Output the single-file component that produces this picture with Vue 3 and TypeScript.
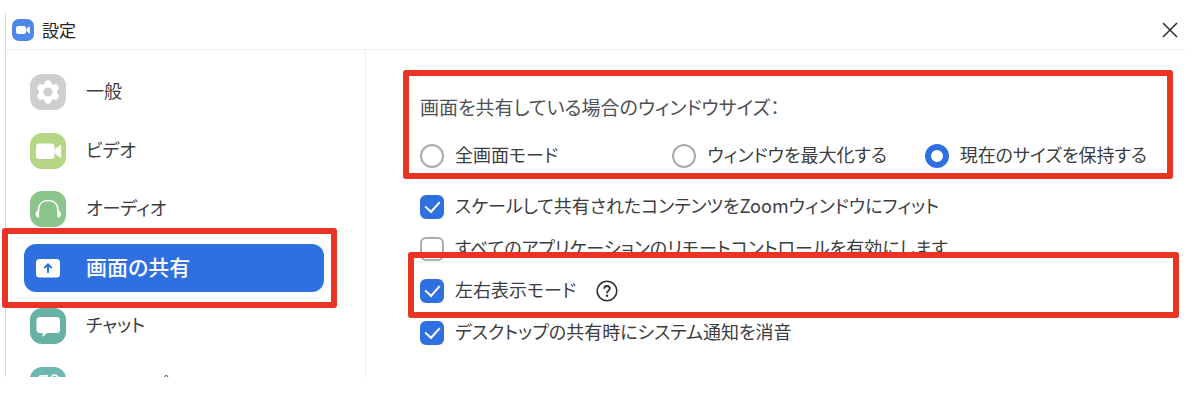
<script setup lang="ts">
import { ref } from 'vue'

interface NavItem {
  id: string
  label: string
  tint: string
}

interface Toggle {
  id: string
  label: string
  checked: boolean
  help?: boolean
  marked?: boolean
}

const navItems: NavItem[] = [
  { id: 'general', label: '一般', tint: 'gray' },
  { id: 'video', label: 'ビデオ', tint: 'lime' },
  { id: 'audio', label: 'オーディオ', tint: 'green' },
  { id: 'share', label: '画面の共有', tint: 'blue' },
  { id: 'chat', label: 'チャット', tint: 'teal' },
  { id: 'apps', label: 'Zoomアプリ', tint: 'aqua' },
]
const current = ref('share')

const sizes = [
  { id: 'full', label: '全画面モード' },
  { id: 'max', label: 'ウィンドウを最大化する' },
  { id: 'keep', label: '現在のサイズを保持する' },
]
const size = ref('keep')

const toggles = ref<Toggle[]>([
  { id: 'fit', label: 'スケールして共有されたコンテンツをZoomウィンドウにフィット', checked: true },
  { id: 'remote', label: 'すべてのアプリケーションのリモートコントロールを有効にします', checked: false },
  { id: 'side', label: '左右表示モード', checked: true, help: true, marked: true },
  { id: 'mute', label: 'デスクトップの共有時にシステム通知を消音', checked: true },
])
</script>

<template>
  <div class="page">
    <div class="window">
      <header class="titlebar">
        <svg class="logo" viewBox="0 0 22 22" aria-hidden="true">
          <rect width="22" height="22" rx="7" fill="#4f86ea" />
          <rect x="4" y="7" width="10" height="8" rx="2" fill="#fff" />
          <path d="M14.8 9.8 17.6 7.6V14.4L14.8 12.2Z" fill="#fff" stroke="#fff" stroke-width=".6" stroke-linejoin="round" />
        </svg>
        <h1 class="title">設定</h1>
        <button class="close" type="button" aria-label="閉じる">
          <svg viewBox="0 0 16 16" aria-hidden="true">
            <path d="M1 1 15 15M15 1 1 15" stroke="#333" stroke-width="1.6" fill="none" />
          </svg>
        </button>
      </header>

      <div class="body">
        <nav class="sidebar">
          <button
            v-for="item in navItems"
            :key="item.id"
            type="button"
            class="nav-item"
            :class="{ active: current === item.id }"
            @click="current = item.id"
          >
            <span class="icon" :class="item.tint">
              <svg viewBox="0 0 36 36" aria-hidden="true">
                <template v-if="item.id === 'general'">
                  <g fill="#fff">
                    <circle cx="18" cy="18" r="9" />
                    <rect v-for="a in [0, 60, 120]" :key="a" x="14.6" y="6.4" width="6.8" height="23.2" rx="2.4" :transform="`rotate(${a} 18 18)`" />
                  </g>
                  <circle cx="18" cy="18" r="4.6" fill="#cfcfcf" />
                </template>
                <template v-else-if="item.id === 'video'">
                  <rect x="6" y="10.5" width="18.5" height="15.5" rx="3" fill="#fff" />
                  <path d="M25 16.6 30.6 12.2V24.4L25 20Z" fill="#fff" stroke="#fff" stroke-linejoin="round" />
                </template>
                <template v-else-if="item.id === 'audio'">
                  <path d="M8.5 22V19C8.5 13 12.5 9.5 18.2 9.5S28 13 28 19V22" fill="none" stroke="#fff" stroke-width="1.6" />
                  <path d="M8.6 19.5V26.2C6.8 26.2 6 25 6 23.3 6 21.4 7 20 8.6 19.5ZM27.900 19.5V26.2C29.7 26.2 30.5 25 30.5 23.3 30.5 21.4 29.5 20 27.900 19.5Z" fill="#fff" stroke="#fff" stroke-width="1" stroke-linejoin="round" />
                </template>
                <template v-else-if="item.id === 'share'">
                  <rect x="6" y="9" width="24" height="18.5" rx="3.5" fill="#fff" />
                  <path d="M18 22.7V14.6M14.3 18 18 14.3 21.7 18" fill="none" stroke="#2f70e0" stroke-width="2" />
                </template>
                <template v-else-if="item.id === 'chat'">
                  <path d="M10 9H26.5Q30 9 30 12.5V21.5Q30 25 26.5 25H17L12.6 29V25H10Q6.5 25 6.5 21.5V12.5Q6.5 9 10 9Z" fill="#fff" />
                </template>
                <template v-else>
                  <g fill="none" stroke="#fff" stroke-width="1.8">
                    <path d="M18 8.8H12Q8.5 8.8 8.500 12.3V17H17" />
                    <circle cx="24.5" cy="12" r="3.8" />
                    <rect x="8.5" y="20.5" width="8" height="8" rx="2" />
                    <rect x="20.5" y="20.5" width="8" height="8" rx="2" />
                  </g>
                </template>
              </svg>
            </span>
            <span class="nav-label">{{ item.label }}</span>
            <span v-if="item.id === 'share'" class="mark mark-nav" aria-hidden="true"></span>
          </button>
        </nav>

        <main class="panel">
          <fieldset class="sizes">
            <legend class="legend">画面を共有している場合のウィンドウサイズ：</legend>
            <div class="options">
              <label v-for="s in sizes" :key="s.id" class="choice">
                <input v-model="size" type="radio" name="window-size" :value="s.id" />
                <span class="choice-label">{{ s.label }}</span>
              </label>
            </div>
            <span class="mark mark-sizes" aria-hidden="true"></span>
          </fieldset>

          <div class="toggles">
            <div v-for="t in toggles" :key="t.id" class="toggle">
              <label class="choice">
                <input v-model="t.checked" type="checkbox" />
                <span class="choice-label">{{ t.label }}</span>
              </label>
              <button v-if="t.help" class="help" type="button" aria-label="ヘルプ">
                <svg viewBox="0 0 22 22" aria-hidden="true">
                  <circle cx="11" cy="11" r="9.8" fill="none" stroke="#333" stroke-width="1.6" />
                  <path d="M8.2 8.7C8.2 7 9.4 6 11 6S13.8 7 13.8 8.6C13.8 10.6 11 10.8 11 13.2" fill="none" stroke="#333" stroke-width="1.8" />
                  <circle cx="11" cy="15.8" r="1.2" fill="#333" />
                </svg>
              </button>
              <span v-if="t.marked" class="mark mark-toggle" aria-hidden="true"></span>
            </div>
          </div>
        </main>
      </div>
    </div>
  </div>
</template>

<style>
body {
  margin: 0;
  background: #fff;
}
</style>

<style scoped>
* {
  box-sizing: border-box;
}

.page {
  display: flex;
  height: 100vh;
  padding: 13px 15px 31px 5px;
  font-family: 'Noto Sans CJK JP', sans-serif;
  font-feature-settings: 'palt';
  font-size: 18px;
  line-height: 28px;
  color: #3c3c42;
}

.window {
  flex: 1;
  display: flex;
  flex-direction: column;
  overflow-x: visible;
  overflow-y: clip;
  border-left: 1px solid #dcdcdc;
}

button {
  padding: 0;
  border: 0;
  background: none;
  font: inherit;
  font-feature-settings: inherit;
  color: inherit;
  text-align: left;
}

svg {
  display: block;
  width: 100%;
  height: 100%;
}

.titlebar {
  display: flex;
  flex: none;
  align-items: center;
  gap: 8px;
  height: 37px;
  padding: 0 7px 3px 6px;
  border-bottom: 1px solid #ececec;
}

.logo {
  width: 22px;
  height: 22px;
}

.title {
  margin: 0;
  font-size: 17px;
  font-weight: 400;
  color: #222;
}

.close {
  width: 16px;
  height: 16px;
  margin-left: auto;
}

.body {
  display: flex;
  flex: 1;
  min-height: 0;
}

.sidebar {
  display: flex;
  flex: none;
  flex-direction: column;
  justify-content: space-between;
  width: 360px;
  height: 359px;
  padding: 18px 41px 0 18px;
  border-right: 1px solid #ececec;
}

.nav-item {
  position: relative;
  display: flex;
  align-items: center;
  gap: 20px;
  height: 48px;
  padding: 0 6px;
  border-radius: 12px;
}

.nav-label {
  padding-bottom: 4px;
}

.nav-item.active {
  z-index: 1;
  background: #2f70e0;
  color: #fff;
  font-size: 21px;
  font-weight: 500;
}

.icon {
  flex: none;
  width: 36px;
  height: 36px;
  border-radius: 12px;
}

.gray { background: #cfcfcf; }
.lime { background: #b5d685; }
.green { background: #8bc48a; }
.teal { background: #68b1a6; }
.aqua { background: #6cb8b0; }

.panel {
  flex: 1;
  padding: 43px 8px 0 54px;
}

.sizes {
  position: relative;
  min-width: 0;
  margin: 0 0 23px;
  padding: 0;
  border: 0;
}

.legend {
  padding: 0;
  margin-bottom: 21px;
  font-size: 19px;
  color: #505056;
}

.options {
  display: grid;
  grid-template-columns: repeat(3, 1fr);
}

.toggles {
  display: flex;
  flex-direction: column;
  gap: 14px;
}

.toggle {
  position: relative;
  display: flex;
  align-items: center;
  gap: 20px;
}

.choice {
  display: flex;
  align-items: center;
  gap: 11px;
  white-space: nowrap;
}

.choice-label {
  padding-bottom: 3px;
  line-height: 25px;
}

input {
  display: grid;
  flex: none;
  place-items: center;
  width: 24px;
  height: 24px;
  margin: 0;
  appearance: none;
  border: 2px solid #ababab;
  background: #fff;
}

input[type='radio'] {
  border-radius: 50%;
}

input[type='radio']:checked {
  border: 6px solid #2f70e0;
}

input[type='checkbox'] {
  border-radius: 6px;
}

input[type='checkbox']:checked {
  border-color: #2f70e0;
  background: #2f70e0;
}

input[type='checkbox']:checked::after {
  content: '';
  width: 7px;
  height: 12px;
  margin-bottom: 4px;
  border: solid #fff;
  border-width: 0 2px 2px 0;
  transform: rotate(42deg);
}

.help {
  width: 22px;
  height: 22px;
}

.mark {
  position: absolute;
  z-index: 2;
  border: 6px solid #e93323;
  border-radius: 3px;
  pointer-events: none;
}

.mark-nav {
  inset: -16px -13px -16px -22px;
}

.mark-sizes {
  inset: -72px 4px -9px -17px;
}

.mark-toggle {
  inset: -25px -2px -13px -12px;
}
</style>
